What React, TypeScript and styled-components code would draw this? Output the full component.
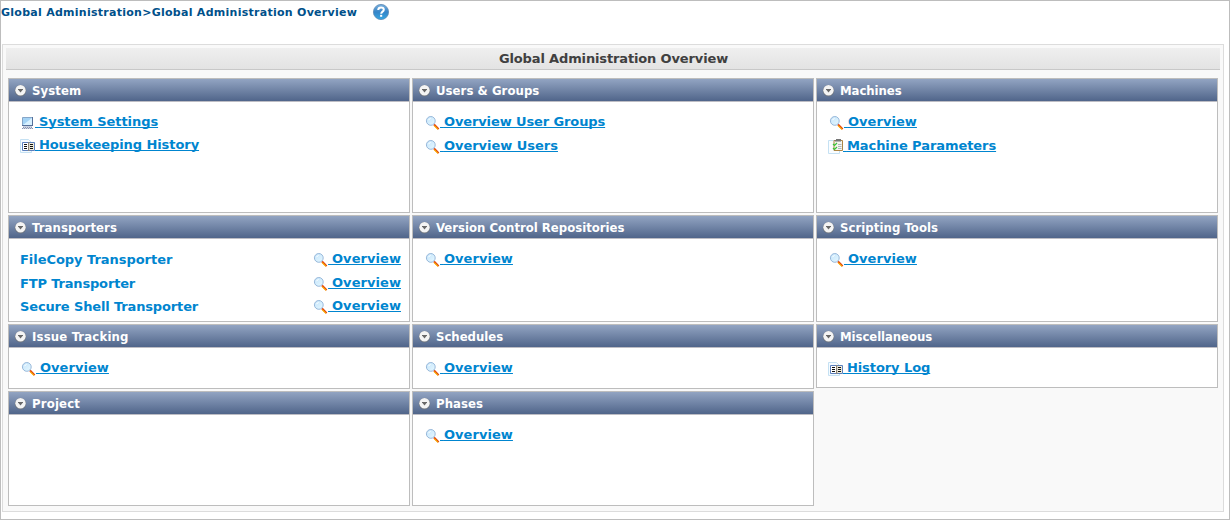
import React from 'react';
import styled, { createGlobalStyle } from 'styled-components';

const GlobalStyle = createGlobalStyle`
  body { margin: 0; background: #fff; }
  * { box-sizing: border-box; }
  svg { display: block; flex: none; }
`;

const Page = styled.div`
  width: 1230px;
  height: 520px;
  border: 1px solid #bdbdbd;
  font-family: "DejaVu Sans", Verdana, sans-serif;
  font-weight: 700;
`;

const Breadcrumb = styled.nav`
  display: flex;
  align-items: center;
  gap: 15px;
  height: 22px;
  margin-bottom: 21px;
  color: #00508a;
  font-size: 11px;
  letter-spacing: 0.27px;
  white-space: nowrap;
`;

const Panel = styled.main`
  width: 1222px;
  height: 468px;
  margin-left: 1px;
  padding: 3px;
  border: 1px solid #dcdcdc;
  background: #f9f9f9;
`;

const PanelTitle = styled.h1`
  margin: 0 0 8px;
  padding-left: 1px;
  height: 22px;
  border-bottom: 1px solid #c8c8c8;
  background: linear-gradient(#efefef, #e3e3e3);
  color: #404040;
  font-size: 13px;
  line-height: 21px;
  letter-spacing: -0.14px;
  text-align: center;
`;

const Grid = styled.div`
  display: grid;
  grid-template-columns: repeat(3, 402px);
  grid-template-rows: 135px 107px 65px 115px;
  gap: 2px;
  padding-left: 2px;
`;

const Card = styled.section<{ $short?: boolean }>`
  border: 1px solid #bdbdbd;
  background: #fff;
  margin-bottom: ${(p) => (p.$short ? '1px' : '0')};
`;

const CardHeader = styled.h2<{ $spacing: number }>`
  display: flex;
  align-items: flex-start;
  gap: 5px;
  height: 23px;
  margin: 0;
  padding-left: 5px;
  border-bottom: 1px solid #bdbdc4;
  background: linear-gradient(#92a4c2, #50658a);
  color: #fff;
  font-family: "DejaVu Sans Condensed", Tahoma, sans-serif;
  font-size: 13px;
  line-height: 24px;
  letter-spacing: ${(p) => p.$spacing}px;

  svg { margin-top: 5px; }
`;

const CardBody = styled.div`
  padding: 8px 8px 0 11px;
`;

const Row = styled.div<{ $height: number }>`
  display: flex;
  justify-content: space-between;
  height: ${(p) => p.$height}px;
  font-size: 13px;
  line-height: 24px;
  color: #0085cf;
  white-space: pre;
`;

const Label = styled.span<{ $spacing: number }>`
  padding-top: 1px;
  letter-spacing: ${(p) => p.$spacing}px;
`;

const Link = styled.a`
  display: flex;
  color: inherit;
  text-decoration: none;
`;

const IconCell = styled.span<{ $width: number }>`
  width: ${(p) => p.$width}px;
  padding-top: 4px;
`;

const LinkText = styled.span<{ $spacing: number }>`
  letter-spacing: ${(p) => p.$spacing}px;
  text-decoration: underline;
  text-decoration-thickness: 1px;
  text-underline-offset: 1px;
  text-decoration-skip-ink: none;
`;

const Gap = styled.span`
  letter-spacing: -0.6px;
`;

const Toggle = () => (
  <svg width="13" height="13" viewBox="0 0 13 13">
    <circle cx="6.5" cy="6.8" r="5.7" fill="#6d737c" />
    <circle cx="6.5" cy="6.3" r="5.2" fill="#f4f4f4" />
    <path d="M4 5h5v1H8.5L6.5 8.5 4.5 6H4z" fill="#686868" />
  </svg>
);

const Help = () => (
  <svg width="18" height="18" viewBox="0 0 18 18">
    <defs>
      <linearGradient id="help" x1="0" y1="0" x2="0" y2="1">
        <stop offset="0" stopColor="#7bb2df" />
        <stop offset=".5" stopColor="#3584c8" />
        <stop offset="1" stopColor="#35a7e2" />
      </linearGradient>
    </defs>
    <circle cx="9" cy="9" r="7.6" fill="url(#help)" stroke="#5b88b4" strokeWidth=".8" />
    <path d="M6.2 7c.1-1.7 1.2-2.5 2.8-2.5s2.8.9 2.8 2.2c0 1.9-2.6 2-2.6 4" fill="none" stroke="#fff" strokeWidth="2" />
    <path d="M8.1 11.8h2.1v2H8.1z" fill="#fff" />
  </svg>
);

const Magnifier = () => (
  <svg width="16" height="16" viewBox="0 0 16 16">
    <defs>
      <linearGradient id="lens" x1="0" y1="0" x2="1" y2="1">
        <stop offset="0" stopColor="#c4e4fb" />
        <stop offset="1" stopColor="#e6f8ff" />
      </linearGradient>
    </defs>
    <path d="M10 10.5l4.6 4.6" stroke="#e2400f" strokeWidth="2" />
    <path d="M10.2 11.6l3.8 3.8" stroke="#f9b400" strokeWidth="1.1" />
    <circle cx="6.8" cy="6.9" r="4.4" fill="url(#lens)" stroke="#98b8da" />
    <path d="M4.6 6.2a2.4 2.4 0 0 1 2-1.7" stroke="#fff" fill="none" />
  </svg>
);

const Computer = () => (
  <svg width="16" height="16" viewBox="0 0 16 16">
    <path d="M2.5 3.5h10v8h-10z" fill="#a4d3f5" stroke="#86a6c8" />
    <path d="M3 11l9-7v7z" fill="#d8f1ff" />
    <path d="M12.5 3v9M2 11.5h11" stroke="#56709a" />
    <path d="M3 12.5h9" stroke="#c9d0e0" />
    <path d="M3 13.5h9M2 14.5h11" stroke="#8b97b4" strokeDasharray="1.4 .6" />
  </svg>
);

const Book = () => (
  <svg width="16" height="16" viewBox="0 0 16 16">
    <path d="M.5 2.5h8l3 3v10H.5z" fill="#f5fbff" stroke="#c5e1f3" />
    <path d="M2.5 5.5h12v8h-12z" fill="#fff" stroke="#5c80be" />
    <path d="M8 5h1.5v9H8z" fill="#8e8678" />
    <path d="M9.5 6H14v7H9.5z" fill="#f1ecd9" />
    <path d="M4 7.5h3M4 9.5h3M4 11.5h3M10 7.5h3M10 9.5h3M10 11.5h3" stroke="#111" />
  </svg>
);

const Clipboard = () => (
  <svg width="16" height="16" viewBox="0 0 16 16">
    <path d="M.5 2.5h11v13H.5z" fill="#fafdff" stroke="#c5e1f3" />
    <path d="M6 2.5h8.5v10H6z" fill="#f5f5ef" stroke="#ad8545" />
    <path d="M8 1h5v2.6H7V2h1z" fill="#777" />
    <path d="M10 6.5h3.5M10 8.5h3.5M10 10.5h3.5" stroke="#aeb6bb" />
    <path d="M5 6l1.5 1.5L9 5M5 10l1.5 1.5L9 9" fill="none" stroke="#37c437" strokeWidth="1.2" />
  </svg>
);

const icons = { magnifier: Magnifier, computer: Computer, book: Book, clipboard: Clipboard };

interface Item {
  text: string;
  icon?: keyof typeof icons;
  label?: string;
  labelSpacing?: number;
  spacing?: number;
  cell?: number;
  height?: number;
}

const overview: Item = { text: 'Overview', spacing: 0.06 };

const cards: { title: string; spacing?: number; short?: boolean; items: Item[] }[] = [
  {
    title: 'System',
    spacing: 0.1,
    items: [
      { text: 'System Settings', icon: 'computer', spacing: -0.06, cell: 15, height: 23 },
      { text: 'Housekeeping History', icon: 'book', spacing: -0.07, cell: 15 },
    ],
  },
  {
    title: 'Users & Groups',
    spacing: 0.06,
    items: [
      { text: 'Overview User Groups', spacing: -0.11 },
      { text: 'Overview Users', spacing: -0.02 },
    ],
  },
  {
    title: 'Machines',
    spacing: -0.05,
    items: [overview, { text: 'Machine Parameters', icon: 'clipboard', spacing: -0.07, cell: 15 }],
  },
  {
    title: 'Transporters',
    spacing: 0.09,
    items: [
      { ...overview, label: 'FileCopy Transporter', labelSpacing: -0.04 },
      { ...overview, label: 'FTP Transporter', labelSpacing: -0.16, height: 23 },
      { ...overview, label: 'Secure Shell Transporter', labelSpacing: -0.14 },
    ],
  },
  { title: 'Version Control Repositories', items: [overview] },
  { title: 'Scripting Tools', spacing: 0.06, items: [overview] },
  { title: 'Issue Tracking', spacing: 0.17, items: [overview] },
  { title: 'Schedules', items: [overview] },
  {
    title: 'Miscellaneous',
    spacing: -0.07,
    short: true,
    items: [{ text: 'History Log', icon: 'book', spacing: -0.08, cell: 15 }],
  },
  { title: 'Project', spacing: 0.17, items: [] },
  { title: 'Phases', spacing: 0.06, items: [overview] },
];

function ItemRow({ text, icon = 'magnifier', label, labelSpacing = 0, spacing = 0, cell = 16, height = 24 }: Item) {
  const Icon = icons[icon];
  return (
    <Row $height={height}>
      {label && <Label $spacing={labelSpacing}>{label}</Label>}
      <Link>
        <IconCell $width={cell}>
          <Icon />
        </IconCell>
        <LinkText $spacing={spacing}>
          <Gap> </Gap>
          {text}
        </LinkText>
      </Link>
    </Row>
  );
}

export default function App() {
  return (
    <Page>
      <GlobalStyle />
      <Breadcrumb>
        <span>Global Administration&gt;Global Administration Overview</span>
        <Help />
      </Breadcrumb>
      <Panel>
        <PanelTitle>Global Administration Overview</PanelTitle>
        <Grid>
          {cards.map((card) => (
            <Card key={card.title} $short={card.short}>
              <CardHeader $spacing={card.spacing ?? 0}>
                <Toggle />
                {card.title}
              </CardHeader>
              <CardBody>
                {card.items.map((item, i) => (
                  <ItemRow key={i} {...item} />
                ))}
              </CardBody>
            </Card>
          ))}
        </Grid>
      </Panel>
    </Page>
  );
}
